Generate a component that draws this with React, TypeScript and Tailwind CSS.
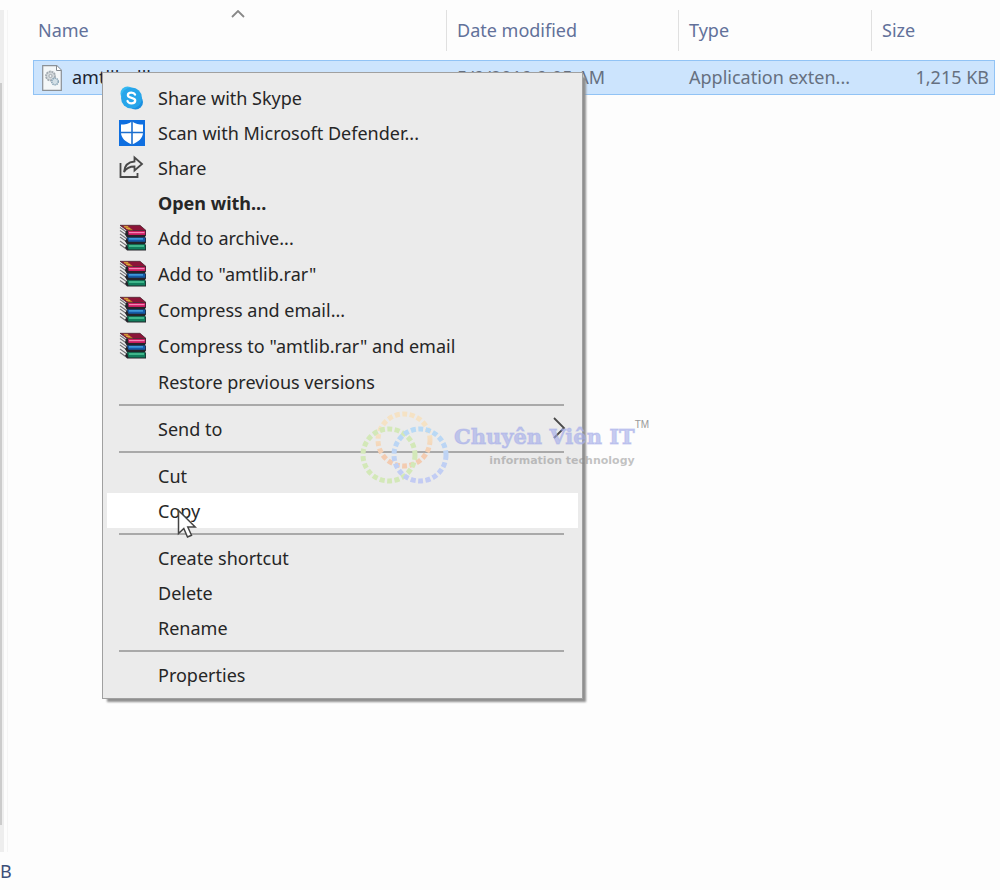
import React from "react";

type IconProps = { className?: string };

const SkypeIcon: React.FC<IconProps> = ({ className }) => (
  <svg viewBox="0 0 26 26" className={className} aria-hidden="true">
    <circle cx="8.500" cy="8.500" r="7" fill="#35b8f1" />
    <circle cx="16.500" cy="17" r="7.500" fill="#1a8fe0" />
    <circle cx="12.500" cy="13" r="10.500" fill="#27a5ea" />
    <path
      d="M16 9.600C15.400 8.300 14 7.700 12.400 7.700c-2 0-3.500 1-3.500 2.600 0 3.400 7.300 1.700 7.300 5.200 0 1.800-1.700 2.800-3.800 2.800-1.900 0-3.400-.8-3.900-2.300"
      fill="none"
      stroke="#fff"
      strokeWidth="2.300"
      strokeLinecap="round"
    />
  </svg>
);

const DefenderIcon: React.FC<IconProps> = ({ className }) => (
  <svg viewBox="0 0 26 26" className={className} aria-hidden="true">
    <path d="M0 0h26v26H0z" fill="#0f6fe0" />
    <path d="M13 1.500c3.500 2.500 7 3 11 3v8c0 5.500-4.500 9.500-11 12-6.500-2.500-11-6.500-11-12v-8c4 0 7.500-.5 11-3z" fill="#fff" />
    <path d="M13 1v24M1 12.500h24" stroke="#1c6fcf" strokeWidth="1.600" />
  </svg>
);

const ShareIcon: React.FC<IconProps> = ({ className }) => (
  <svg viewBox="0 0 26 26" className={className} fill="none" stroke="#484848" strokeWidth="1.800" aria-hidden="true">
    <path d="M1.500 8v14h17v-4" />
    <path d="M15.500 2.500l7.500 6.500-7.500 6.500v-4c-5 0-8 1.300-10.500 5.500.5-6 3.500-10 10.500-10.500z" />
  </svg>
);

const ArchiveIcon: React.FC<IconProps> = ({ className }) => (
  <svg viewBox="0 0 28 28" className={className} aria-hidden="true">
    {/* page edges */}
    <path d="M1 2l7 5v5L1 7zM1 9l7 5v5l-7-5zM1 15.500l7 5v6l-7-5z" fill="#f4f4f4" />
    <path d="M1 3.500l7 5M1 6.500l7 5M1 10l7 5M1 13l7 5M1 17l7 5M1 20.500l7 5" stroke="#77777a" strokeWidth="1.200" />
    {/* shadows between the books */}
    <path d="M7 6.500h20v5L26 13l1 1v4.500L26 20l1 1v5.500H8l-2-3 2-3-2-3.500 2-3-2-3.500z" fill="#24242a" />
    <path d="M1 1.300h20l6 5.200H8z" fill="#8c1438" stroke="#3f1c28" strokeWidth=".7" />
    <path d="M4 1.700h4.500l5.500 4.500H9.500z" fill="#b97528" />
    <path d="M5 2.800h4M7 4.500h4" stroke="#e7b34a" strokeWidth=".8" />
    <path d="M9 7h17.300v4H9.500z" fill="#c91c60" />
    <path d="M10 8h15.500v1.200H10z" fill="#f486b6" />
    <path d="M8 13.500h18.300v4.300H9.500z" fill="#145ba8" />
    <path d="M10 14.300h14v1.200H10z" fill="#4fb2ee" />
    <path d="M8 20.300h18.300v5.200H9.500z" fill="#117e5d" />
    <path d="M10 21.300h15v1.400H10z" fill="#53cfa0" />
  </svg>
);

const FileIcon: React.FC<IconProps> = ({ className }) => (
  <svg viewBox="0 0 20 26" className={className} aria-hidden="true">
    <path d="M.7.700h14l4.600 4.600v20H.7z" fill="#f4f7f8" stroke="#8b9095" strokeWidth="1.200" />
    <path d="M14.500.700v4.800h4.800" fill="#fff" stroke="#858b91" />
    <circle cx="8.500" cy="11" r="4.500" fill="#d5dadd" stroke="#a3abb1" strokeWidth="1.800" strokeDasharray="2 .7" />
    <circle cx="8.500" cy="11" r="1.600" fill="#edf1f3" stroke="#a3abb1" />
    <circle cx="13" cy="16.500" r="3.300" fill="#d3e0e7" stroke="#8fa9b9" strokeWidth="1.600" strokeDasharray="1.500 .6" />
  </svg>
);

const Cursor: React.FC<IconProps> = ({ className }) => (
  <svg viewBox="0 0 20 30" className={className} aria-hidden="true">
    <path d="M1.500 1.500v23l5.300-5 3.700 8.500 4-1.700-3.700-8.300h7.400z" fill="#fff" stroke="#444" strokeWidth="1.500" />
  </svg>
);

type MenuEntry = {
  label: string;
  icon?: React.FC<IconProps>;
  iconClass?: string;
  bold?: boolean;
  active?: boolean;
  submenu?: boolean;
};

const archive = { icon: ArchiveIcon, iconClass: "size-7" };

const menuGroups: MenuEntry[][] = [
  [
    { label: "Share with Skype", icon: SkypeIcon, iconClass: "size-[26px]" },
    { label: "Scan with Microsoft Defender...", icon: DefenderIcon, iconClass: "size-[26px]" },
    { label: "Share", icon: ShareIcon, iconClass: "size-[26px]" },
    { label: "Open with...", bold: true },
    { label: "Add to archive...", ...archive },
    { label: 'Add to "amtlib.rar"', ...archive },
    { label: "Compress and email...", ...archive },
    { label: 'Compress to "amtlib.rar" and email', ...archive },
    { label: "Restore previous versions" },
  ],
  [{ label: "Send to", submenu: true }],
  [{ label: "Cut" }, { label: "Copy", active: true }],
  [{ label: "Create shortcut" }, { label: "Delete" }, { label: "Rename" }],
  [{ label: "Properties" }],
];

const MenuItem: React.FC<{ entry: MenuEntry }> = ({ entry }) => {
  const Icon = entry.icon;
  return (
    <button
      type="button"
      role="menuitem"
      className={`relative flex min-h-[35px] w-full items-center py-1 pr-3 text-left ${
        entry.active ? "bg-white" : "hover:bg-white"
      } ${entry.bold ? "font-bold" : ""}`}
    >
      <span className="flex w-[51px] shrink-0 pl-3">
        {Icon && <Icon className={entry.iconClass} />}
      </span>
      <span className="flex-1 leading-6">{entry.label}</span>
      {entry.submenu && (
        <svg viewBox="0 0 14 24" className="h-6 w-3.5" fill="none" stroke="#4a4a4a" strokeWidth="1.800" aria-hidden="true">
          <path d="M2 1l10 10L2 21" />
        </svg>
      )}
      {entry.active && <Cursor className="absolute top-4 left-[70px] h-[30px] w-5" />}
    </button>
  );
};

const ContextMenu: React.FC = () => (
  <div
    role="menu"
    className="absolute top-[72px] left-[102px] w-[481px] border border-[#a0a0a0] bg-[#ebebeb] px-1 pt-[7px] pb-1.5 text-[18px] text-[#262626] shadow-[4px_4px_2px_-1px_#8f8f8f]"
  >
    {menuGroups.map((group, idx) => (
      <React.Fragment key={group[0].label}>
        {idx > 0 && <hr className="mr-3.5 ml-3 my-[5px] border-t-2 border-[#a9a9a9]" />}
        {group.map((entry) => (
          <MenuItem key={entry.label} entry={entry} />
        ))}
      </React.Fragment>
    ))}
  </div>
);

const Watermark: React.FC = () => (
  <div className="pointer-events-none absolute top-[405px] left-[358px] flex items-start">
    <svg viewBox="0 0 96 80" className="h-20 w-24" fill="none" strokeWidth="5" strokeDasharray="5 2.500" aria-hidden="true">
      <defs>
        <linearGradient id="ring-warm" x1="0" y1="0" x2="0" y2="1">
          <stop offset=".4" stopColor="#f5e2c4" />
          <stop offset=".8" stopColor="#f3cbb0" />
        </linearGradient>
        <linearGradient id="ring-cool" x1="0" y1="0" x2="0" y2="1">
          <stop offset="0" stopColor="#b8daf5" />
          <stop offset="1" stopColor="#c3cbf3" />
        </linearGradient>
      </defs>
      <circle cx="46" cy="35" r="26" stroke="url(#ring-warm)" />
      <circle cx="31" cy="50" r="26" stroke="#d3e8b8" />
      <circle cx="62" cy="50" r="26" stroke="url(#ring-cool)" />
    </svg>
    <div className="flex flex-col pt-5">
      <span className="font-['DejaVu_Serif',serif] text-[21px] leading-6 font-bold text-[#a6aee9]/65 [-webkit-text-stroke:1px_#a6aee980]">
        Chuyên Viên IT
      </span>
      <span className="self-end font-['DejaVu_Sans',sans-serif] text-[11px] leading-6 font-bold text-[#888888]/50">
        information technology
      </span>
    </div>
    <span className="pt-3 font-['Liberation_Sans',sans-serif] text-[10px] leading-4 text-[#999999]">TM</span>
  </div>
);

const columns = [
  { label: "Name", width: "w-[414px]", pad: "pl-[5px]" },
  { label: "Date modified", width: "w-[232px]", pad: "pl-2.5" },
  { label: "Type", width: "w-[193px]", pad: "pl-2.5" },
  { label: "Size", width: "", pad: "pl-2.5" },
];

const FileList: React.FC = () => (
  <table className="w-full table-fixed border-collapse text-[18px]">
    <thead>
      <tr className="text-left text-[#62719a]">
        {columns.map((col, idx) => (
          <th key={col.label} scope="col" className={`relative p-0 pb-[9px] font-normal ${col.width}`}>
            <div
              className={`flex h-[41px] items-center ${col.pad} ${
                idx < columns.length - 1 ? "border-r border-[#e0e0e0]" : ""
              }`}
            >
              {col.label}
            </div>
            {idx === 0 && (
              <svg viewBox="0 0 14 8" className="absolute top-0 left-[198px] h-2 w-3.5" fill="none" stroke="#888" strokeWidth="1.800" aria-hidden="true">
                <path d="M1 7l6-6 6 6" />
              </svg>
            )}
          </th>
        ))}
      </tr>
    </thead>
    <tbody>
      <tr className="h-[35px] bg-[#cce4fd] text-[#667080] outline outline-1 -outline-offset-1 outline-[#91c3f5]">
        <td className="p-0 pl-[9px]">
          <span className="flex items-center gap-2.5 text-[#1c2430]">
            <FileIcon className="h-[26px] w-5" />
            amtlib.dll
          </span>
        </td>
        <td className="p-0 pl-2.5">5/9/2019 9:05 AM</td>
        <td className="truncate p-0 pl-2.5">Application exten...</td>
        <td className="p-0 pr-1.5 text-right">1,215 KB</td>
      </tr>
    </tbody>
  </table>
);

export default function App() {
  return (
    <div className="relative flex min-h-screen flex-col overflow-hidden bg-[#fdfdfd] font-['Noto_Sans','Open_Sans',sans-serif] select-none">
      <main className="flex flex-1 pt-2.5">
        <div className="flex w-2 shrink-0 border-r border-[#f5f5f5]">
          <div className="w-1 bg-[#eeeeee] pt-[73px] pb-[27px]">
            <div className="h-full w-0.5 bg-[#cccccc]" />
          </div>
        </div>
        <div className="min-w-0 flex-1 pr-[5px] pl-[25px]">
          <FileList />
        </div>
      </main>
      <footer className="flex h-[38px] items-center text-[18px] text-[#3c4f78]">B</footer>
      <ContextMenu />
      <Watermark />
    </div>
  );
}
